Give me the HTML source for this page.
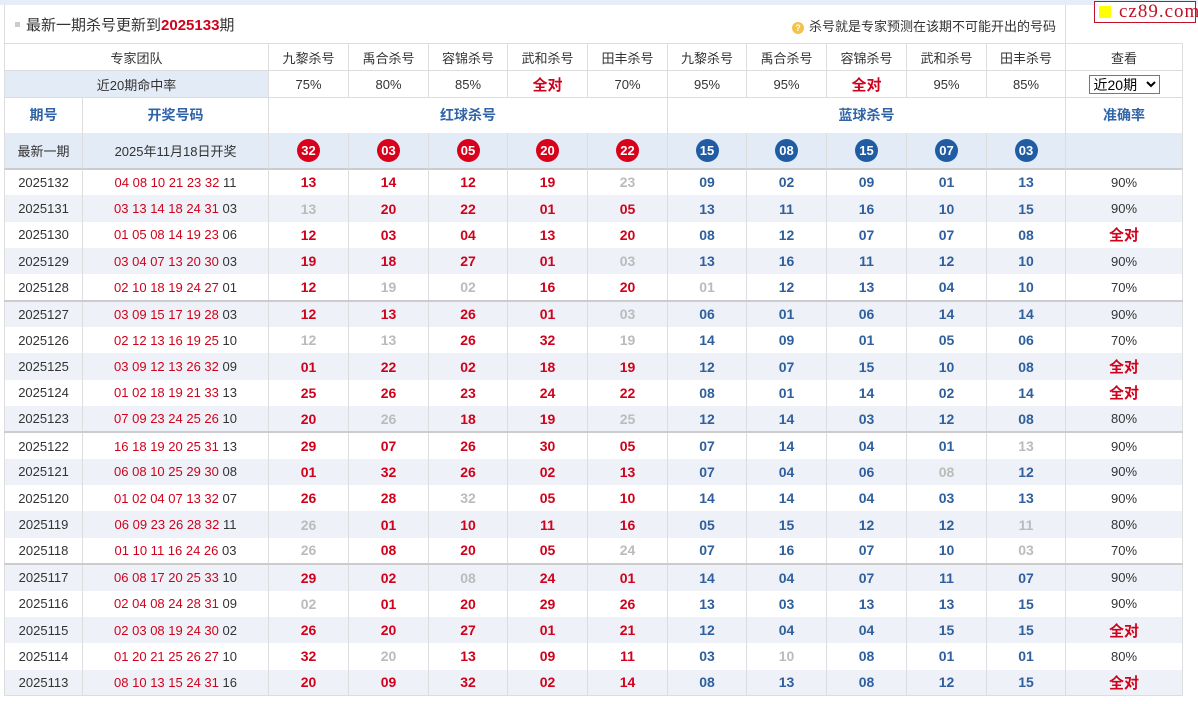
<!DOCTYPE html>
<html><head><meta charset="utf-8"><style>
*{margin:0;padding:0;box-sizing:border-box}
body{width:1198px;height:704px;background:#fff;font-family:"Liberation Sans","Noto Sans CJK SC",sans-serif;font-size:13px;color:#333;position:relative;overflow:hidden}
.topband{position:absolute;left:0;top:0;width:1198px;height:5px;background:#e6edf6}
.head{position:absolute;left:4px;top:5px;width:1178px;height:38px;border-left:1px solid #ddd}
.head .t{position:absolute;left:10px;top:9px;font-size:15px;color:#333}
.head .t b{color:#d0021b}
.head .t i{display:inline-block;width:5px;height:5px;background:#ccc;margin-right:6px;vertical-align:middle;position:relative;top:-2px}
.head .tip{position:absolute;right:126px;top:11px;font-size:13px}
.head .q{display:inline-block;width:12px;height:12px;border-radius:50%;background:#f3c24a;color:#fff;font-size:9px;text-align:center;line-height:12px;font-weight:bold;margin-right:5px;vertical-align:0}
.head .sep{position:absolute;left:1060px;top:0;height:38px;border-left:1px solid #ddd}
.logo{position:absolute;left:1094px;top:1px;width:102px;height:22px;border:1px solid #c0102a;background:#fff;font-family:"Liberation Serif",serif;font-size:19px;color:#c0102a;line-height:19px;padding-left:24px;letter-spacing:1px}
.logo:before{content:"";position:absolute;left:4px;top:4px;width:12px;height:12px;background:#ff0}
table{position:absolute;left:4px;top:43px;border-collapse:collapse;table-layout:fixed;width:1178px}
td{text-align:center;border-left:1px solid #ddd;border-right:1px solid #ddd;padding:0;white-space:nowrap;overflow:hidden}
tr.h td{border:1px solid #ddd;height:27px}
tr.h2 td{height:27px;border:1px solid #ddd}
.lb{background:#e3ebf6}
.fd{color:#d0021b;font-weight:bold;font-size:15px}
tr.k td{height:35px;color:#2f64a8;font-weight:bold;font-size:14px;border-top:1px solid #ddd}
tr.n td{height:36px;background:#e3ebf6;border-bottom:2px solid #ccc}
.ball{display:inline-block;width:23px;height:23px;border-radius:50%;color:#fff;font-weight:bold;font-size:13px;line-height:23px;text-align:center}
.br{background:#d8001a}.bb{background:#1f5ca3}
tr.d td{height:26.35px}
tr.d:nth-child(even) td{background:#eef2f8}
tr.s td{border-top:2px solid #ccc}
.dr{color:#d0021b}
.r{color:#d0021b;font-weight:bold;font-size:14px}
.b{color:#2f5f9c;font-weight:bold;font-size:14px}
.g{color:#bbb;font-weight:bold;font-size:14px}
.ok{color:#d0021b;font-weight:bold;font-size:15px}
select{font-size:14px;width:71px;height:19px;font-family:"Liberation Sans","Noto Sans CJK SC",sans-serif;border:1px solid #777;background:#fff}
tr.last td{border-bottom:1px solid #ddd}
</style></head><body>
<div class="topband"></div>
<div class="head"><div class="t"><i></i>最新一期杀号更新到<b>2025133</b>期</div><div class="tip"><span class="q">?</span>杀号就是专家预测在该期不可能开出的号码</div><div class="sep"></div></div>
<div class="logo">cz89.com</div>
<table>
<colgroup><col style="width:78px"><col style="width:186px"><col style="width:80px"><col style="width:80px"><col style="width:79px"><col style="width:80px"><col style="width:80px"><col style="width:79px"><col style="width:80px"><col style="width:80px"><col style="width:80px"><col style="width:79px"><col style="width:117px"></colgroup>
<tr class="h"><td colspan="2">专家团队</td><td>九黎杀号</td><td>禹合杀号</td><td>容锦杀号</td><td>武和杀号</td><td>田丰杀号</td><td>九黎杀号</td><td>禹合杀号</td><td>容锦杀号</td><td>武和杀号</td><td>田丰杀号</td><td>查看</td></tr>
<tr class="h2"><td colspan="2" class="lb">近20期命中率</td><td>75%</td><td>80%</td><td>85%</td><td class="fd">全对</td><td>70%</td><td>95%</td><td>95%</td><td class="fd">全对</td><td>95%</td><td>85%</td><td><select><option>近20期</option></select></td></tr>
<tr class="k"><td>期号</td><td>开奖号码</td><td colspan="5">红球杀号</td><td colspan="5">蓝球杀号</td><td>准确率</td></tr>
<tr class="n"><td>最新一期</td><td>2025年11月18日开奖</td><td><span class="ball br">32</span></td><td><span class="ball br">03</span></td><td><span class="ball br">05</span></td><td><span class="ball br">20</span></td><td><span class="ball br">22</span></td><td><span class="ball bb">15</span></td><td><span class="ball bb">08</span></td><td><span class="ball bb">15</span></td><td><span class="ball bb">07</span></td><td><span class="ball bb">03</span></td><td></td></tr>
</table>
<table style="top:169px">
<colgroup><col style="width:78px"><col style="width:186px"><col style="width:80px"><col style="width:80px"><col style="width:79px"><col style="width:80px"><col style="width:80px"><col style="width:79px"><col style="width:80px"><col style="width:80px"><col style="width:80px"><col style="width:79px"><col style="width:117px"></colgroup>
<tr class="d"><td>2025132</td><td><span class="dr">04 08 10 21 23 32</span> 11</td><td class="r">13</td><td class="r">14</td><td class="r">12</td><td class="r">19</td><td class="g">23</td><td class="b">09</td><td class="b">02</td><td class="b">09</td><td class="b">01</td><td class="b">13</td><td>90%</td></tr>
<tr class="d"><td>2025131</td><td><span class="dr">03 13 14 18 24 31</span> 03</td><td class="g">13</td><td class="r">20</td><td class="r">22</td><td class="r">01</td><td class="r">05</td><td class="b">13</td><td class="b">11</td><td class="b">16</td><td class="b">10</td><td class="b">15</td><td>90%</td></tr>
<tr class="d"><td>2025130</td><td><span class="dr">01 05 08 14 19 23</span> 06</td><td class="r">12</td><td class="r">03</td><td class="r">04</td><td class="r">13</td><td class="r">20</td><td class="b">08</td><td class="b">12</td><td class="b">07</td><td class="b">07</td><td class="b">08</td><td class="ok">全对</td></tr>
<tr class="d"><td>2025129</td><td><span class="dr">03 04 07 13 20 30</span> 03</td><td class="r">19</td><td class="r">18</td><td class="r">27</td><td class="r">01</td><td class="g">03</td><td class="b">13</td><td class="b">16</td><td class="b">11</td><td class="b">12</td><td class="b">10</td><td>90%</td></tr>
<tr class="d"><td>2025128</td><td><span class="dr">02 10 18 19 24 27</span> 01</td><td class="r">12</td><td class="g">19</td><td class="g">02</td><td class="r">16</td><td class="r">20</td><td class="g">01</td><td class="b">12</td><td class="b">13</td><td class="b">04</td><td class="b">10</td><td>70%</td></tr>
<tr class="d s"><td>2025127</td><td><span class="dr">03 09 15 17 19 28</span> 03</td><td class="r">12</td><td class="r">13</td><td class="r">26</td><td class="r">01</td><td class="g">03</td><td class="b">06</td><td class="b">01</td><td class="b">06</td><td class="b">14</td><td class="b">14</td><td>90%</td></tr>
<tr class="d"><td>2025126</td><td><span class="dr">02 12 13 16 19 25</span> 10</td><td class="g">12</td><td class="g">13</td><td class="r">26</td><td class="r">32</td><td class="g">19</td><td class="b">14</td><td class="b">09</td><td class="b">01</td><td class="b">05</td><td class="b">06</td><td>70%</td></tr>
<tr class="d"><td>2025125</td><td><span class="dr">03 09 12 13 26 32</span> 09</td><td class="r">01</td><td class="r">22</td><td class="r">02</td><td class="r">18</td><td class="r">19</td><td class="b">12</td><td class="b">07</td><td class="b">15</td><td class="b">10</td><td class="b">08</td><td class="ok">全对</td></tr>
<tr class="d"><td>2025124</td><td><span class="dr">01 02 18 19 21 33</span> 13</td><td class="r">25</td><td class="r">26</td><td class="r">23</td><td class="r">24</td><td class="r">22</td><td class="b">08</td><td class="b">01</td><td class="b">14</td><td class="b">02</td><td class="b">14</td><td class="ok">全对</td></tr>
<tr class="d"><td>2025123</td><td><span class="dr">07 09 23 24 25 26</span> 10</td><td class="r">20</td><td class="g">26</td><td class="r">18</td><td class="r">19</td><td class="g">25</td><td class="b">12</td><td class="b">14</td><td class="b">03</td><td class="b">12</td><td class="b">08</td><td>80%</td></tr>
<tr class="d s"><td>2025122</td><td><span class="dr">16 18 19 20 25 31</span> 13</td><td class="r">29</td><td class="r">07</td><td class="r">26</td><td class="r">30</td><td class="r">05</td><td class="b">07</td><td class="b">14</td><td class="b">04</td><td class="b">01</td><td class="g">13</td><td>90%</td></tr>
<tr class="d"><td>2025121</td><td><span class="dr">06 08 10 25 29 30</span> 08</td><td class="r">01</td><td class="r">32</td><td class="r">26</td><td class="r">02</td><td class="r">13</td><td class="b">07</td><td class="b">04</td><td class="b">06</td><td class="g">08</td><td class="b">12</td><td>90%</td></tr>
<tr class="d"><td>2025120</td><td><span class="dr">01 02 04 07 13 32</span> 07</td><td class="r">26</td><td class="r">28</td><td class="g">32</td><td class="r">05</td><td class="r">10</td><td class="b">14</td><td class="b">14</td><td class="b">04</td><td class="b">03</td><td class="b">13</td><td>90%</td></tr>
<tr class="d"><td>2025119</td><td><span class="dr">06 09 23 26 28 32</span> 11</td><td class="g">26</td><td class="r">01</td><td class="r">10</td><td class="r">11</td><td class="r">16</td><td class="b">05</td><td class="b">15</td><td class="b">12</td><td class="b">12</td><td class="g">11</td><td>80%</td></tr>
<tr class="d"><td>2025118</td><td><span class="dr">01 10 11 16 24 26</span> 03</td><td class="g">26</td><td class="r">08</td><td class="r">20</td><td class="r">05</td><td class="g">24</td><td class="b">07</td><td class="b">16</td><td class="b">07</td><td class="b">10</td><td class="g">03</td><td>70%</td></tr>
<tr class="d s"><td>2025117</td><td><span class="dr">06 08 17 20 25 33</span> 10</td><td class="r">29</td><td class="r">02</td><td class="g">08</td><td class="r">24</td><td class="r">01</td><td class="b">14</td><td class="b">04</td><td class="b">07</td><td class="b">11</td><td class="b">07</td><td>90%</td></tr>
<tr class="d"><td>2025116</td><td><span class="dr">02 04 08 24 28 31</span> 09</td><td class="g">02</td><td class="r">01</td><td class="r">20</td><td class="r">29</td><td class="r">26</td><td class="b">13</td><td class="b">03</td><td class="b">13</td><td class="b">13</td><td class="b">15</td><td>90%</td></tr>
<tr class="d"><td>2025115</td><td><span class="dr">02 03 08 19 24 30</span> 02</td><td class="r">26</td><td class="r">20</td><td class="r">27</td><td class="r">01</td><td class="r">21</td><td class="b">12</td><td class="b">04</td><td class="b">04</td><td class="b">15</td><td class="b">15</td><td class="ok">全对</td></tr>
<tr class="d"><td>2025114</td><td><span class="dr">01 20 21 25 26 27</span> 10</td><td class="r">32</td><td class="g">20</td><td class="r">13</td><td class="r">09</td><td class="r">11</td><td class="b">03</td><td class="g">10</td><td class="b">08</td><td class="b">01</td><td class="b">01</td><td>80%</td></tr>
<tr class="d last"><td>2025113</td><td><span class="dr">08 10 13 15 24 31</span> 16</td><td class="r">20</td><td class="r">09</td><td class="r">32</td><td class="r">02</td><td class="r">14</td><td class="b">08</td><td class="b">13</td><td class="b">08</td><td class="b">12</td><td class="b">15</td><td class="ok">全对</td></tr>
</table>
</body></html>
